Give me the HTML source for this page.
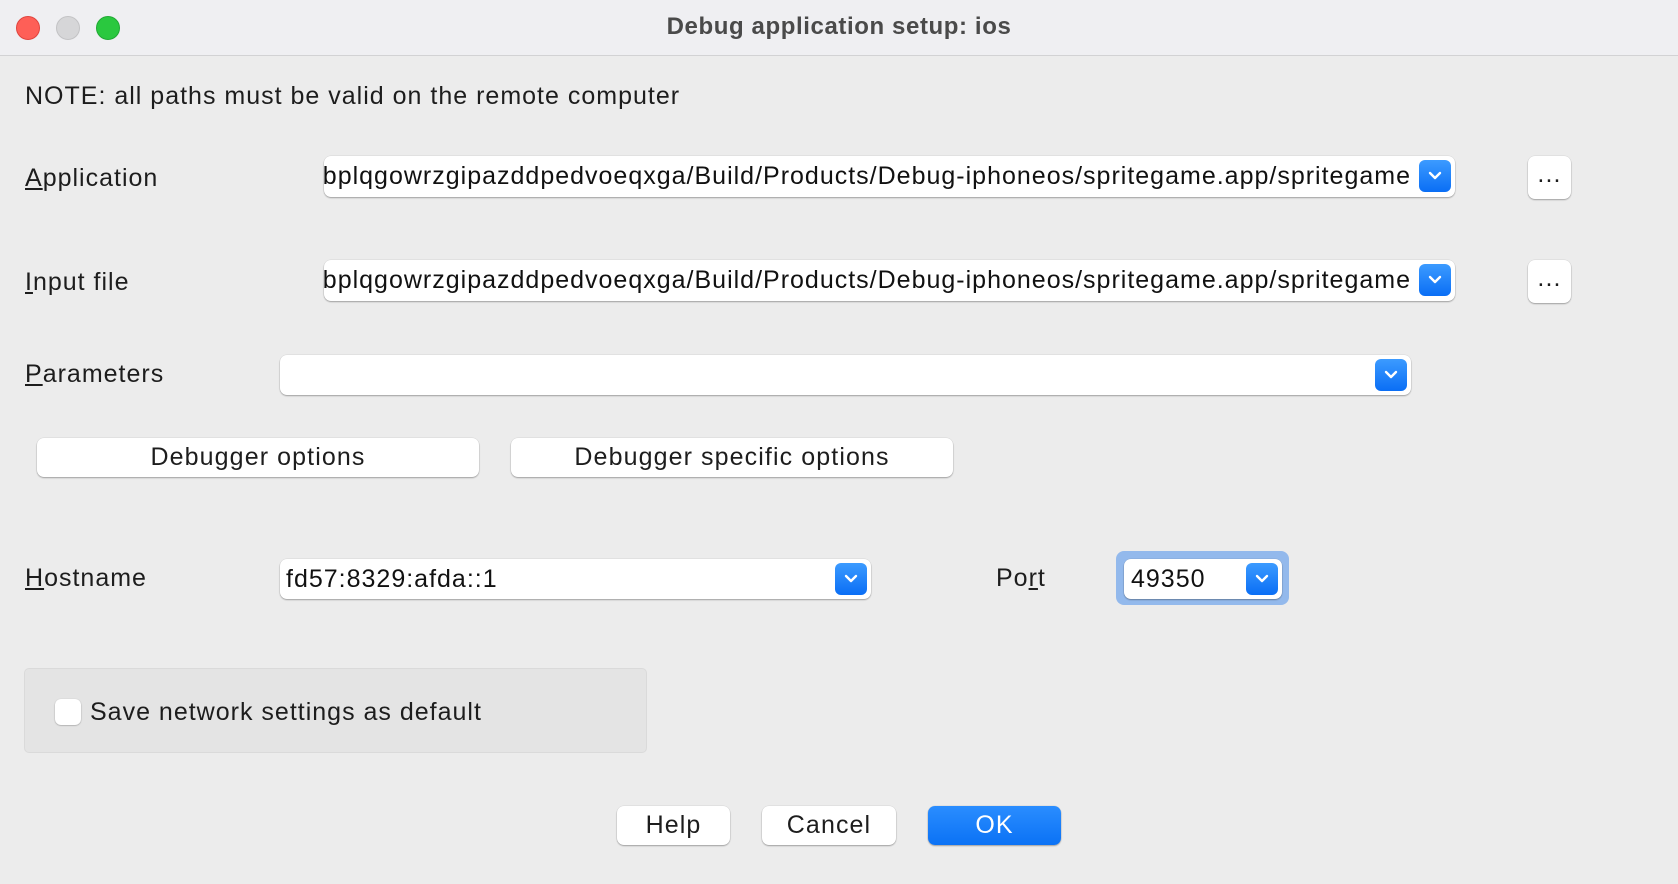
<!DOCTYPE html>
<html><head><meta charset="utf-8"><style>
*{box-sizing:border-box;margin:0;padding:0}
body{width:1678px;height:884px;background:#ececec;font-family:"Liberation Sans",sans-serif;color:#1d1d1d;position:relative;overflow:hidden}
.abs{position:absolute}
.title{left:0;top:0;width:1678px;height:56px;background:#efeff2;border-bottom:1px solid #d2d2d4}
.tl{top:16px;width:24px;height:24px;border-radius:50%}
.lbl{font-size:25px;letter-spacing:1px;white-space:nowrap;line-height:30px}
.combo{background:#fff;border-radius:7px;box-shadow:0 1px 1.5px rgba(0,0,0,.3),0 0 0 .5px rgba(0,0,0,.08)}
.combo .txt{position:absolute;left:0;right:44px;top:0;bottom:0;overflow:hidden;display:flex;justify-content:flex-end;align-items:center;font-size:25px;letter-spacing:1px;white-space:nowrap;color:#111}
.blue{position:absolute;right:4px;top:4px;width:32px;height:32px;border-radius:6px;background:linear-gradient(#3c9bff,#0a6ef5)}
.blue svg{position:absolute;left:8px;top:9px}
.btn{background:#fff;border-radius:7px;box-shadow:0 1px 1.5px rgba(0,0,0,.3),0 0 0 .5px rgba(0,0,0,.08);font-size:25px;letter-spacing:1.1px;text-align:center;color:#1d1d1d}
</style></head><body>
<div class="abs title"></div>
<div class="abs tl" style="left:16px;background:#fe5f57;border:1px solid #e0443e"></div>
<div class="abs tl" style="left:56px;background:#d6d6d8;border:1px solid #c3c3c5"></div>
<div class="abs tl" style="left:96px;background:#2ac83f;border:1px solid #20a934"></div>
<div class="abs" style="left:0;width:1678px;top:12px;text-align:center;font-weight:bold;font-size:24px;letter-spacing:.6px;color:#4a4a4a;line-height:30px">Debug application setup: ios</div>

<div class="abs lbl" style="left:25px;top:81px">NOTE: all paths must be valid on the remote computer</div>

<div class="abs lbl" style="left:25px;top:163px"><u>A</u>pplication</div>
<div class="abs combo" style="left:324px;top:156px;width:1131px;height:41px"><div class="txt">/Users/dev/Library/Developer/Xcode/DerivedData/spritegame-bplqgowrzgipazddpedvoeqxga/Build/Products/Debug-iphoneos/spritegame.app/spritegame</div><div class="blue"><svg width="16" height="14" viewBox="0 0 16 14"><path d="M3 4l5 5 5-5" fill="none" stroke="#fff" stroke-width="2.4" stroke-linecap="round" stroke-linejoin="round"/></svg></div></div>
<div class="abs btn" style="left:1528px;top:156px;width:43px;height:43px;line-height:36px">...</div>

<div class="abs lbl" style="left:25px;top:267px"><u>I</u>nput file</div>
<div class="abs combo" style="left:324px;top:260px;width:1131px;height:41px"><div class="txt">/Users/dev/Library/Developer/Xcode/DerivedData/spritegame-bplqgowrzgipazddpedvoeqxga/Build/Products/Debug-iphoneos/spritegame.app/spritegame</div><div class="blue"><svg width="16" height="14" viewBox="0 0 16 14"><path d="M3 4l5 5 5-5" fill="none" stroke="#fff" stroke-width="2.4" stroke-linecap="round" stroke-linejoin="round"/></svg></div></div>
<div class="abs btn" style="left:1528px;top:260px;width:43px;height:43px;line-height:36px">...</div>

<div class="abs lbl" style="left:25px;top:359px"><u>P</u>arameters</div>
<div class="abs combo" style="left:280px;top:355px;width:1131px;height:40px"><div class="blue"><svg width="16" height="14" viewBox="0 0 16 14"><path d="M3 4l5 5 5-5" fill="none" stroke="#fff" stroke-width="2.4" stroke-linecap="round" stroke-linejoin="round"/></svg></div></div>

<div class="abs btn" style="left:37px;top:438px;width:442px;height:39px;line-height:39px">Debugger options</div>
<div class="abs btn" style="left:511px;top:438px;width:442px;height:39px;line-height:39px">Debugger specific options</div>

<div class="abs lbl" style="left:25px;top:563px"><u>H</u>ostname</div>
<div class="abs combo" style="left:280px;top:559px;width:591px;height:40px"><div class="txt" style="justify-content:flex-start;padding-left:6px">fd57:8329:afda::1</div><div class="blue"><svg width="16" height="14" viewBox="0 0 16 14"><path d="M3 4l5 5 5-5" fill="none" stroke="#fff" stroke-width="2.4" stroke-linecap="round" stroke-linejoin="round"/></svg></div></div>

<div class="abs lbl" style="left:996px;top:563px">Po<u>r</u>t</div>
<div class="abs" style="left:1116px;top:551px;width:173px;height:54px;border-radius:8px;background:#93b9ec"></div>
<div class="abs combo" style="left:1124px;top:559px;width:158px;height:40px"><div class="txt" style="justify-content:flex-start;padding-left:7px">49350</div><div class="blue"><svg width="16" height="14" viewBox="0 0 16 14"><path d="M3 4l5 5 5-5" fill="none" stroke="#fff" stroke-width="2.4" stroke-linecap="round" stroke-linejoin="round"/></svg></div></div>

<div class="abs" style="left:24px;top:668px;width:623px;height:85px;background:#e4e4e4;border:1px solid #dadada;border-radius:5px"></div>
<div class="abs" style="left:55px;top:699px;width:26px;height:26px;background:#fff;border-radius:6px;box-shadow:0 .5px 1.5px rgba(0,0,0,.35)"></div>
<div class="abs lbl" style="left:90px;top:697px">Save network settings as default</div>

<div class="abs btn" style="left:617px;top:806px;width:113px;height:39px;line-height:39px">Help</div>
<div class="abs btn" style="left:762px;top:806px;width:134px;height:39px;line-height:39px">Cancel</div>
<div class="abs btn" style="left:928px;top:806px;width:133px;height:39px;line-height:39px;background:linear-gradient(#2a8dff,#0b72f5);color:#fff">OK</div>
</body></html>
